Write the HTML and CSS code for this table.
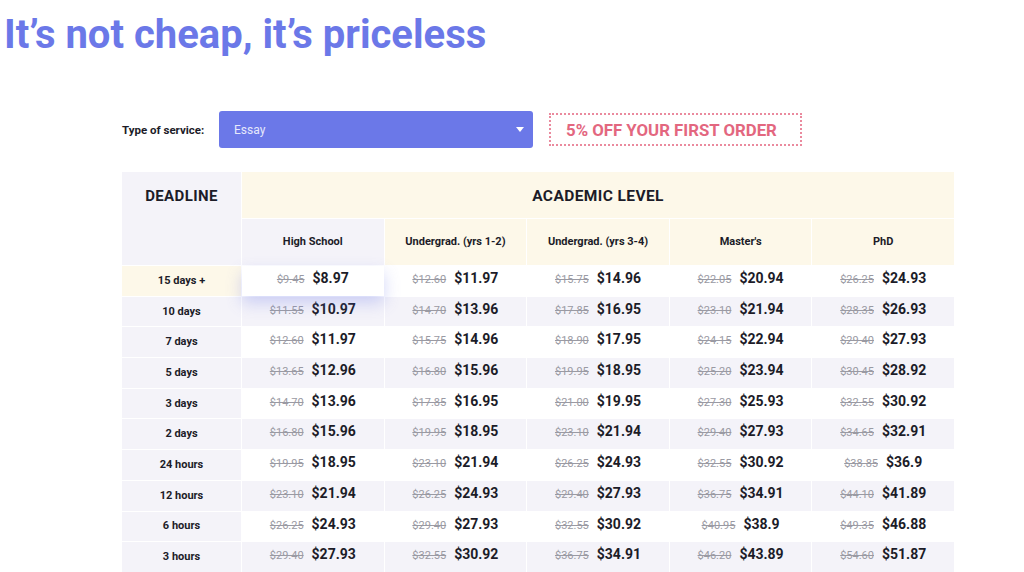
FILE: index.html
```html
<!DOCTYPE html>
<html>
<head>
<meta charset="utf-8">
<link rel="stylesheet" href="styles.css">
</head>
<body>
<h1 class="title">It’s not cheap, it’s priceless</h1>
<div class="controls">
  <span class="label">Type of service:</span>
  <div class="select">
    <span>Essay</span>
    <svg class="caret" width="8" height="5" viewBox="0 0 8 5"><path d="M0 0h8L4 5z" fill="#fff"/></svg>
  </div>
  <div class="promo">5% OFF YOUR FIRST ORDER</div>
</div>
<div class="grid">
  <div class="h-deadline">DEADLINE</div>
  <div class="h-academic">ACADEMIC LEVEL</div>
  <div class="h-sub sel">High School</div>
  <div class="h-sub">Undergrad. (yrs 1-2)</div>
  <div class="h-sub">Undergrad. (yrs 3-4)</div>
  <div class="h-sub">Master's</div>
  <div class="h-sub">PhD</div>

  <div class="d cur">15 days +</div>
  <div class="p sel"><span class="old">$9.45</span><span class="new">$8.97</span></div>
  <div class="p"><span class="old">$12.60</span><span class="new">$11.97</span></div>
  <div class="p"><span class="old">$15.75</span><span class="new">$14.96</span></div>
  <div class="p"><span class="old">$22.05</span><span class="new">$20.94</span></div>
  <div class="p"><span class="old">$26.25</span><span class="new">$24.93</span></div>

  <div class="d">10 days</div>
  <div class="p alt"><span class="old">$11.55</span><span class="new">$10.97</span></div>
  <div class="p alt"><span class="old">$14.70</span><span class="new">$13.96</span></div>
  <div class="p alt"><span class="old">$17.85</span><span class="new">$16.95</span></div>
  <div class="p alt"><span class="old">$23.10</span><span class="new">$21.94</span></div>
  <div class="p alt"><span class="old">$28.35</span><span class="new">$26.93</span></div>

  <div class="d">7 days</div>
  <div class="p"><span class="old">$12.60</span><span class="new">$11.97</span></div>
  <div class="p"><span class="old">$15.75</span><span class="new">$14.96</span></div>
  <div class="p"><span class="old">$18.90</span><span class="new">$17.95</span></div>
  <div class="p"><span class="old">$24.15</span><span class="new">$22.94</span></div>
  <div class="p"><span class="old">$29.40</span><span class="new">$27.93</span></div>

  <div class="d">5 days</div>
  <div class="p alt"><span class="old">$13.65</span><span class="new">$12.96</span></div>
  <div class="p alt"><span class="old">$16.80</span><span class="new">$15.96</span></div>
  <div class="p alt"><span class="old">$19.95</span><span class="new">$18.95</span></div>
  <div class="p alt"><span class="old">$25.20</span><span class="new">$23.94</span></div>
  <div class="p alt"><span class="old">$30.45</span><span class="new">$28.92</span></div>

  <div class="d">3 days</div>
  <div class="p"><span class="old">$14.70</span><span class="new">$13.96</span></div>
  <div class="p"><span class="old">$17.85</span><span class="new">$16.95</span></div>
  <div class="p"><span class="old">$21.00</span><span class="new">$19.95</span></div>
  <div class="p"><span class="old">$27.30</span><span class="new">$25.93</span></div>
  <div class="p"><span class="old">$32.55</span><span class="new">$30.92</span></div>

  <div class="d">2 days</div>
  <div class="p alt"><span class="old">$16.80</span><span class="new">$15.96</span></div>
  <div class="p alt"><span class="old">$19.95</span><span class="new">$18.95</span></div>
  <div class="p alt"><span class="old">$23.10</span><span class="new">$21.94</span></div>
  <div class="p alt"><span class="old">$29.40</span><span class="new">$27.93</span></div>
  <div class="p alt"><span class="old">$34.65</span><span class="new">$32.91</span></div>

  <div class="d">24 hours</div>
  <div class="p"><span class="old">$19.95</span><span class="new">$18.95</span></div>
  <div class="p"><span class="old">$23.10</span><span class="new">$21.94</span></div>
  <div class="p"><span class="old">$26.25</span><span class="new">$24.93</span></div>
  <div class="p"><span class="old">$32.55</span><span class="new">$30.92</span></div>
  <div class="p"><span class="old">$38.85</span><span class="new">$36.9</span></div>

  <div class="d">12 hours</div>
  <div class="p alt"><span class="old">$23.10</span><span class="new">$21.94</span></div>
  <div class="p alt"><span class="old">$26.25</span><span class="new">$24.93</span></div>
  <div class="p alt"><span class="old">$29.40</span><span class="new">$27.93</span></div>
  <div class="p alt"><span class="old">$36.75</span><span class="new">$34.91</span></div>
  <div class="p alt"><span class="old">$44.10</span><span class="new">$41.89</span></div>

  <div class="d">6 hours</div>
  <div class="p"><span class="old">$26.25</span><span class="new">$24.93</span></div>
  <div class="p"><span class="old">$29.40</span><span class="new">$27.93</span></div>
  <div class="p"><span class="old">$32.55</span><span class="new">$30.92</span></div>
  <div class="p"><span class="old">$40.95</span><span class="new">$38.9</span></div>
  <div class="p"><span class="old">$49.35</span><span class="new">$46.88</span></div>

  <div class="d">3 hours</div>
  <div class="p alt"><span class="old">$29.40</span><span class="new">$27.93</span></div>
  <div class="p alt"><span class="old">$32.55</span><span class="new">$30.92</span></div>
  <div class="p alt"><span class="old">$36.75</span><span class="new">$34.91</span></div>
  <div class="p alt"><span class="old">$46.20</span><span class="new">$43.89</span></div>
  <div class="p alt"><span class="old">$54.60</span><span class="new">$51.87</span></div>
</div>
</body>
</html>
```
FILE: styles.css
```css
* { box-sizing: border-box; }
body { margin: 0; font-family: Roboto, "Liberation Sans", sans-serif; background: #fff; color: #1c1c28; }
.title { margin: 0; padding: 13px 0 0 4px; height: 60px; font-size: 40px; font-weight: 700; color: #6b78e8; line-height: 44px; }
.controls { display: flex; align-items: center; margin: 51px 0 0 122px; height: 37px; }
.label { font-size: 11.5px; font-weight: 700; width: 97px; color: #1c1c28; }
.select { width: 314px; height: 37px; background: #6b78e8; border-radius: 3px; display: flex; align-items: center; justify-content: space-between; padding: 0 9px 0 15px; color: #e6e8fb; font-size: 12px; }
.promo { margin-left: 16px; width: 253px; height: 33px; border: 2px dotted #ea8a9e; color: #e3677f; font-weight: 700; font-size: 16.8px; display: flex; align-items: center; padding-left: 15px; white-space: nowrap; }
.grid { display: grid; margin: 24px 0 0 122px; width: 832px; grid-template-columns: 119px repeat(5, 1fr); grid-template-rows: 46px 46px; grid-auto-rows: 29.7px; column-gap: 1px; row-gap: 1px; }
.h-deadline { grid-row: 1 / 3; background: #f4f3f9; font-weight: 700; font-size: 15px; letter-spacing: 0.4px; text-align: center; padding-top: 15px; }
.h-academic { grid-column: 2 / 7; background: #fdf8e9; font-weight: 700; font-size: 15.5px; letter-spacing: 0.4px; text-align: center; line-height: 46px; padding-top: 1px; }
.h-sub { background: #fdf8e9; font-size: 11px; font-weight: 700; display: flex; align-items: center; justify-content: center; padding-bottom: 2px; }
.h-sub.sel { background: #f4f3f9; }
.d { background: #f4f3f9; font-size: 11px; font-weight: 700; display: flex; align-items: center; justify-content: center; padding-bottom: 1px; }
.d.cur { background: #fdf8e9; }
.p { background: #fff; display: flex; align-items: baseline; justify-content: center; gap: 8px; padding-top: 4px; }
.p.alt { background: #f4f3f9; }
.p.sel { background: #fff; box-shadow: 0 7px 16px rgba(107, 120, 232, 0.3); position: relative; z-index: 1; }
.old { font-size: 11px; color: #9a9aa3; text-decoration: line-through; }
.new { font-size: 14px; font-weight: 700; color: #1c1c28; }
```
